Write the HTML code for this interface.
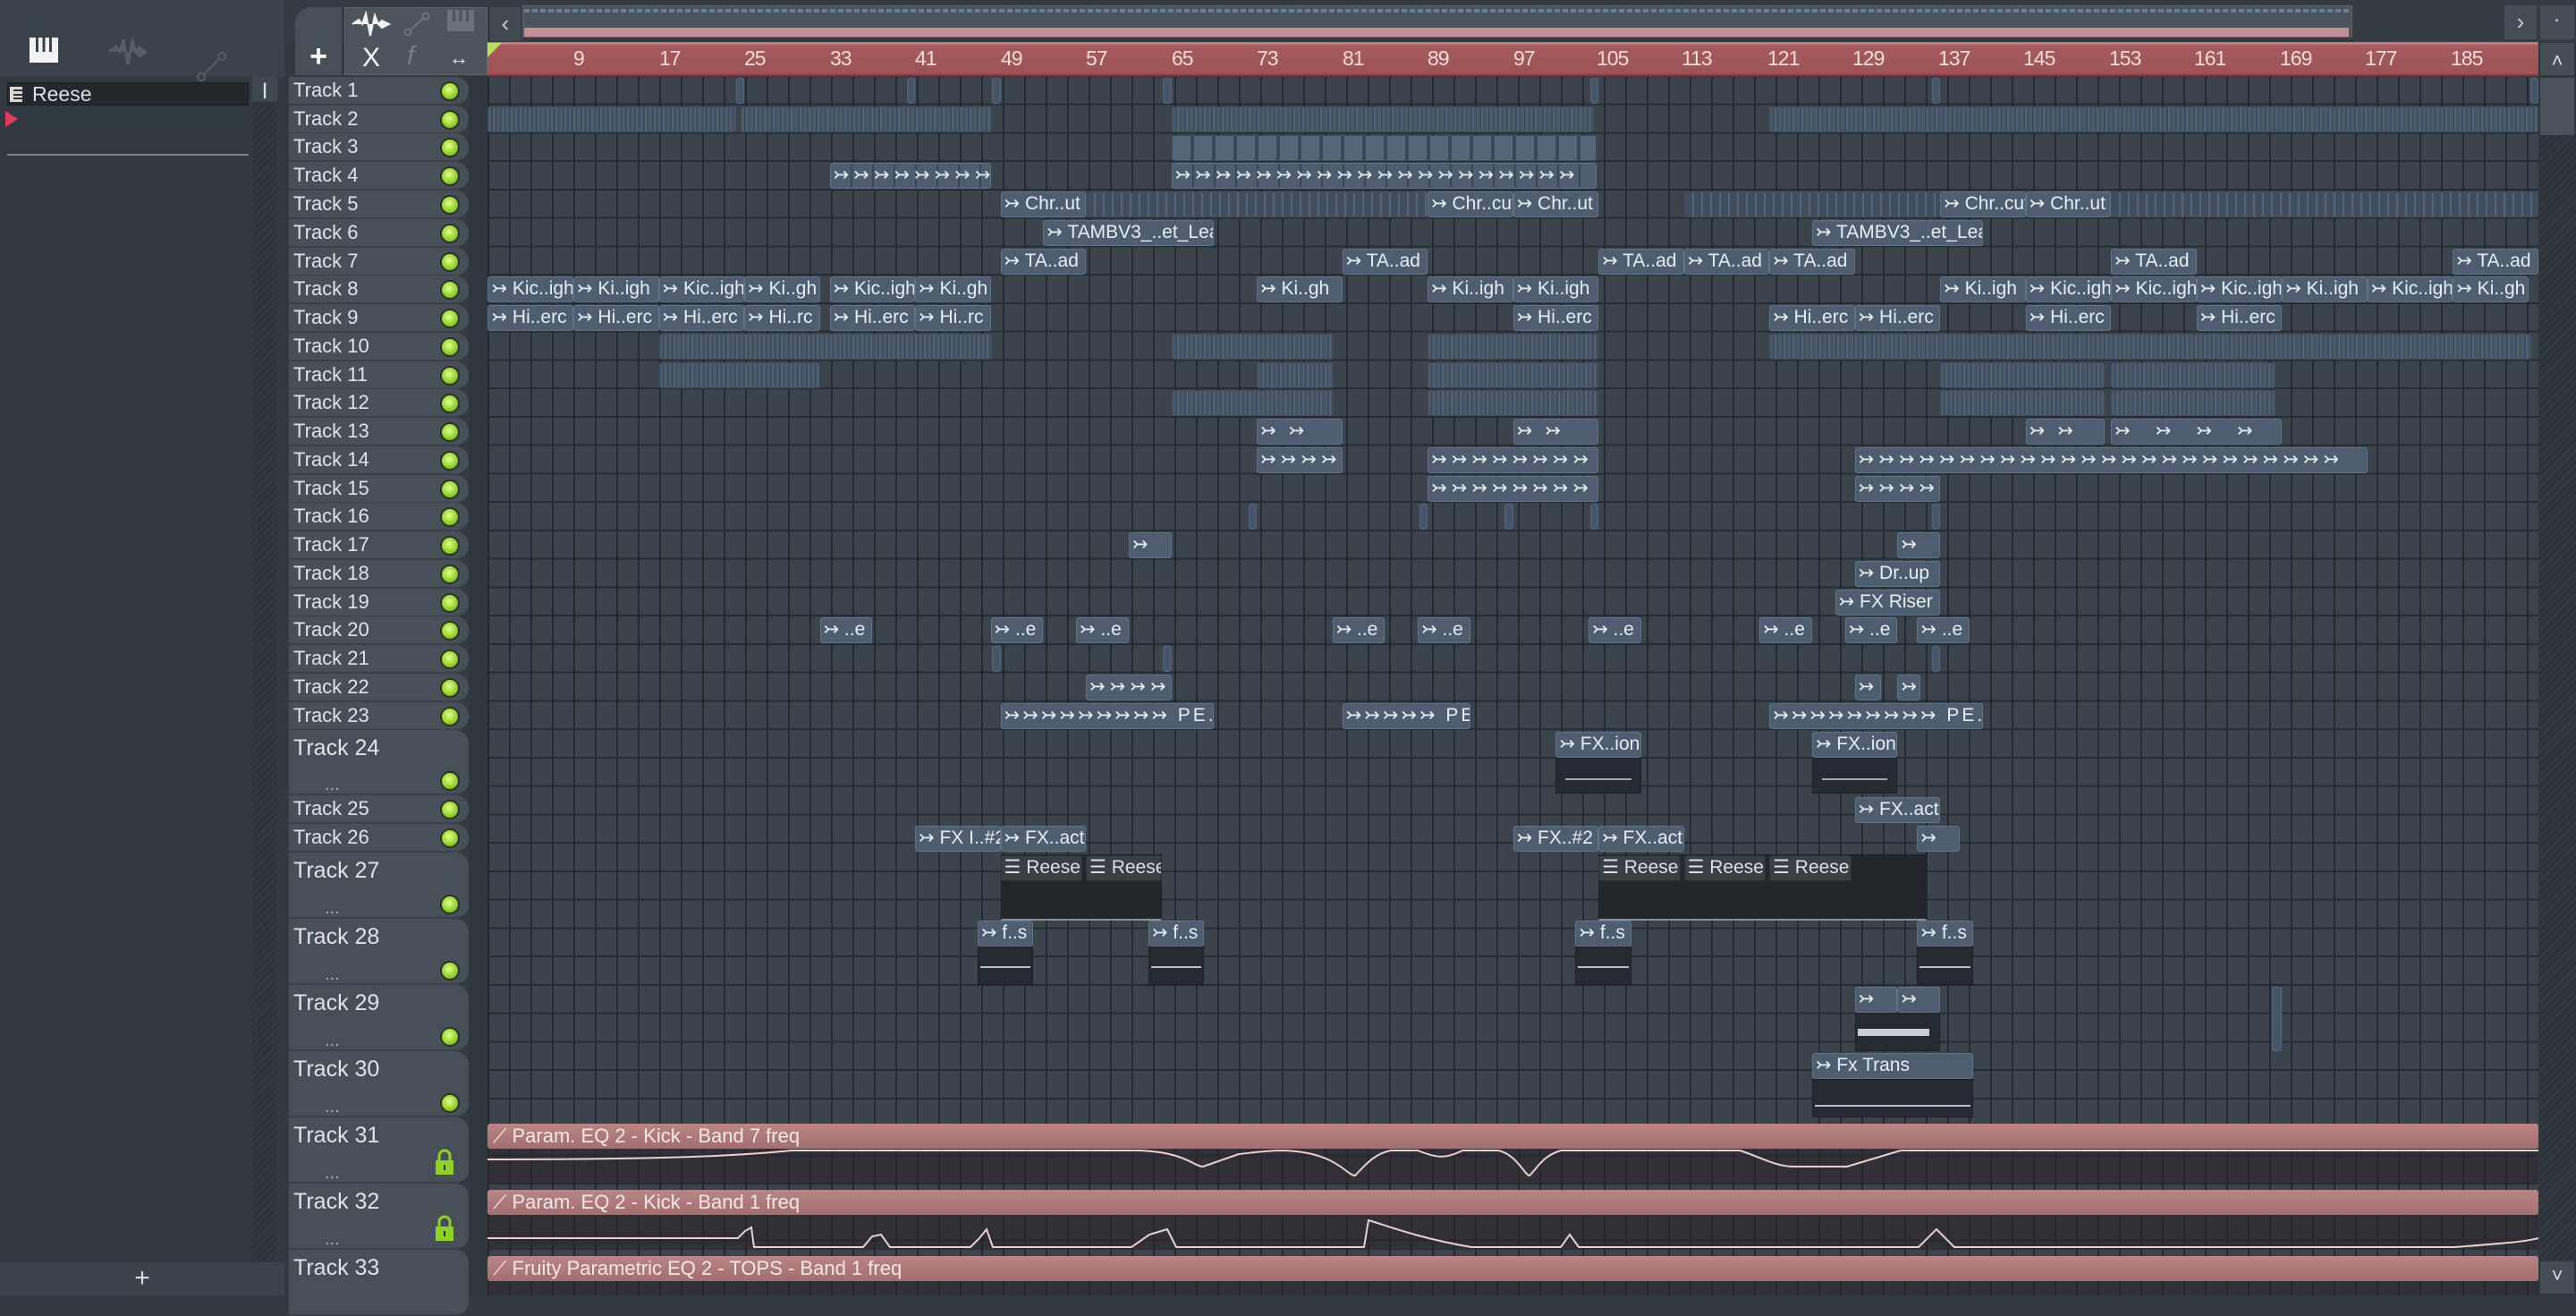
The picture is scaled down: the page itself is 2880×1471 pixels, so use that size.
<!DOCTYPE html>
<html><head><meta charset="utf-8"><style>
*{margin:0;padding:0;box-sizing:border-box}
body{width:2880px;height:1448px;overflow:hidden;background:#333a42;font-family:"Liberation Sans Narrow","Liberation Sans",sans-serif;position:relative}
.ab{position:absolute}
#grid{position:absolute;left:545px;top:86px;width:2293px;height:1362px;background-color:#3b434d;
background-image:repeating-linear-gradient(90deg,#232930 0 2px,transparent 2px 24px),repeating-linear-gradient(180deg,transparent 0 29.75px,#262c33 29.75px 31.75px);}
.ruler{position:absolute;left:545px;top:47px;width:2293px;height:38px;background:linear-gradient(#c47a7a 0 3px,#a65c5e 3px,#9b5355);border-bottom:2px solid #7a3f42}
.ruler span{position:absolute;top:5px;color:#f3dcdc;font-size:23px;letter-spacing:-1px}
.h{position:absolute;left:323px;width:201px;background:#474f58;border-radius:0 15px 15px 0;border-bottom:2px solid #3a4149;color:#e0e4e8;font-size:22px;padding-left:5px;line-height:30px}
.h.t{font-size:25px;line-height:40px}
.l{position:absolute;right:12px;width:18px;height:18px;border-radius:50%;background:radial-gradient(circle at 45% 40%,#e0ff90,#95d42a 55%,#5f9a12);box-shadow:0 0 0 2px #2b3127}
.h .d{position:absolute;left:40px;bottom:0;font-size:20px;color:#aab;line-height:20px}
.c{position:absolute;left:calc(var(--s)*1.8367px);width:calc((var(--e) - var(--s))*1.8367px);top:calc(87px + (var(--r) - 1)*31.75px);height:29px;background:#4e5e70;border:1px solid #617386;border-radius:3px;color:#e6edf3;font-size:21px;line-height:26px;white-space:nowrap;overflow:hidden;padding-left:3px}
.a{background:repeating-linear-gradient(90deg,#4b5b6c 0 3px,#3e4b5a 3px 5px,#52647a 5px 7px,#44525f 7px 10px);border-color:#3f4d5b}
.m{background:#46566a;border-color:#55667a}
.k{background:#3a3f45;border-color:#2d3136}
.bd{position:absolute;left:calc(var(--s)*1.8367px);width:calc((var(--e) - var(--s))*1.8367px);background:#262b31;border:1px solid #1d2126}
.au{position:absolute;left:545px;width:2293px;height:28px;background:linear-gradient(#b98585,#a26e6f);border-radius:3px;color:#f7e8e8;font-size:22px;line-height:28px;padding-left:6px}
.ab2{position:absolute;left:545px;width:2293px;background:rgba(45,36,42,.6)}
</style></head><body>

<!-- left panel -->
<div class="ab" style="left:0;top:0;width:318px;height:86px;background:#3a424b"></div>
<div class="ab" style="left:0;top:86px;width:318px;height:1325px;background:#313941"></div>
<svg class="ab" style="left:33px;top:42px" width="32" height="28"><rect x="0" y="0" width="32" height="28" fill="#f2f2f2"/><rect x="7" y="0" width="3" height="16" fill="#3a424b"/><rect x="14.5" y="0" width="3" height="16" fill="#3a424b"/><rect x="22" y="0" width="3" height="16" fill="#3a424b"/></svg>
<svg class="ab" style="left:120px;top:38px" width="45" height="40"><path d="M2 20 L10 14 L14 20 L18 6 L23 34 L28 8 L32 20 L36 15 L43 20 L36 25 L32 20" fill="#555d66" stroke="#555d66" stroke-width="3"/></svg>
<svg class="ab" style="left:218px;top:55px" width="40" height="40"><circle cx="7" cy="31" r="4" fill="none" stroke="#555d66" stroke-width="2"/><circle cx="30" cy="8" r="4" fill="none" stroke="#555d66" stroke-width="2"/><line x1="10" y1="28" x2="27" y2="11" stroke="#555d66" stroke-width="2"/></svg>
<div class="ab" style="left:8px;top:92px;width:270px;height:26px;background:#24282c;border:1px solid #1b1e21;color:#dde;font-size:23px;line-height:24px;padding-left:27px">Reese</div>
<svg class="ab" style="left:11px;top:97px" width="14" height="17"><rect width="14" height="17" fill="#d8d8d8"/><rect x="4" y="3" width="10" height="2" fill="#333"/><rect x="4" y="8" width="10" height="2" fill="#333"/><rect x="4" y="12" width="10" height="2" fill="#333"/></svg>
<div class="ab" style="left:6px;top:124px;width:0;height:0;border-left:14px solid #e43a5c;border-top:9px solid transparent;border-bottom:9px solid transparent"></div>
<div class="ab" style="left:8px;top:172px;width:270px;height:2px;background:#7b838b"></div>
<div class="ab" style="left:282px;top:86px;width:28px;height:1325px;background:repeating-linear-gradient(135deg,#2c333a 0 3px,#323940 3px 6px)"></div>
<div class="ab" style="left:282px;top:86px;width:28px;height:28px;background:#3f474f;color:#ddd;text-align:center;font-size:18px;line-height:28px;font-weight:bold">|</div>
<div class="ab" style="left:0;top:1411px;width:318px;height:37px;background:#3a424b;color:#ddd;font-size:30px;text-align:center;line-height:36px">+</div>

<!-- header toolbar -->
<div class="ab" style="left:318px;top:0;width:2562px;height:47px;background:#343b43"></div>
<div class="ab" style="left:330px;top:8px;width:52px;height:76px;background:#474f58;border-radius:18px 0 0 0;color:#fff;font-size:34px;text-align:center;line-height:110px;font-weight:bold">+</div>
<div class="ab" style="left:385px;top:8px;width:160px;height:76px;background:#4c545d;border:1px solid #5a626b"></div>
<svg class="ab" style="left:392px;top:12px" width="45" height="30"><path d="M2 15 L9 10 L13 15 L17 3 L22 28 L27 5 L31 15 L35 11 L43 15 L35 19 L31 15" fill="#f0f0f0" stroke="#f0f0f0" stroke-width="2"/></svg>
<svg class="ab" style="left:450px;top:12px" width="32" height="30"><circle cx="6" cy="24" r="3.5" fill="none" stroke="#6d757e" stroke-width="2"/><circle cx="26" cy="6" r="3.5" fill="none" stroke="#6d757e" stroke-width="2"/><line x1="9" y1="21" x2="23" y2="9" stroke="#6d757e" stroke-width="2"/></svg>
<svg class="ab" style="left:500px;top:11px" width="30" height="24"><rect width="30" height="24" fill="#6a727b"/><rect x="6" y="0" width="3" height="13" fill="#4c545d"/><rect x="13.5" y="0" width="3" height="13" fill="#4c545d"/><rect x="21" y="0" width="3" height="13" fill="#4c545d"/></svg>
<div class="ab" style="left:405px;top:48px;color:#fff;font-size:30px">X</div>
<div class="ab" style="left:455px;top:46px;color:#747c85;font-size:30px;font-style:italic">f</div>
<div class="ab" style="left:502px;top:52px;color:#e8e8e8;font-size:22px">&#x2194;</div>
<div class="ab" style="left:548px;top:8px;width:34px;height:38px;background:#414951;color:#ccc;font-size:26px;text-align:center;line-height:36px">&lsaquo;</div>
<div class="ab" style="left:584px;top:6px;width:2046px;height:36px;background:#4b5560;border:1px solid #5b646d"></div>
<div class="ab" style="left:586px;top:10px;width:2040px;height:4px;background:repeating-linear-gradient(90deg,#6c7c90 0 6px,#4b5560 6px 9px)"></div>
<div class="ab" style="left:586px;top:31px;width:2040px;height:10px;background:#c48f90"></div>
<div class="ab" style="left:2800px;top:6px;width:36px;height:38px;background:#454d56;color:#ccc;font-size:26px;text-align:center;line-height:36px">&rsaquo;</div>
<div class="ab" style="left:2840px;top:6px;width:38px;height:38px;background:#454d56;color:#ddd;text-align:center;line-height:36px;font-weight:bold">&middot;</div>

<!-- ruler -->
<div class="ruler">
<div class="ab" style="left:0;top:1px;width:0;height:0;border-left:16px solid #b8e060;border-bottom:16px solid transparent"></div>
<span style="left:96px">9</span><span style="left:192px">17</span><span style="left:287px">25</span><span style="left:383px">33</span><span style="left:478px">41</span><span style="left:574px">49</span><span style="left:669px">57</span><span style="left:765px">65</span><span style="left:860px">73</span><span style="left:956px">81</span><span style="left:1051px">89</span><span style="left:1147px">97</span><span style="left:1240px">105</span><span style="left:1335px">113</span><span style="left:1431px">121</span><span style="left:1526px">129</span><span style="left:1622px">137</span><span style="left:1717px">145</span><span style="left:1813px">153</span><span style="left:1908px">161</span><span style="left:2004px">169</span><span style="left:2099px">177</span><span style="left:2195px">185</span>
</div>

<!-- right scrollbar -->
<div class="ab" style="left:2838px;top:47px;width:42px;height:1401px;background:repeating-linear-gradient(135deg,#2c333a 0 3px,#323940 3px 6px)"></div>
<div class="ab" style="left:2840px;top:48px;width:38px;height:36px;background:#454d56;color:#ddd;text-align:center;font-size:22px;line-height:40px">&#x2C4;</div>
<div class="ab" style="left:2840px;top:87px;width:38px;height:64px;background:#4a525b"></div>
<div class="ab" style="left:2840px;top:1410px;width:38px;height:36px;background:#454d56;color:#ddd;text-align:center;font-size:22px;line-height:32px">&#x2C5;</div>

<div class="ab" style="left:524px;top:86px;width:21px;height:1362px;background:#2f363e"></div>
<div id="grid"></div>

<!-- track headers -->
<div class="h" style="top:86px;height:32px">Track 1<i class="l" style="top:7px"></i></div>
<div class="h" style="top:118px;height:32px">Track 2<i class="l" style="top:7px"></i></div>
<div class="h" style="top:149px;height:32px">Track 3<i class="l" style="top:7px"></i></div>
<div class="h" style="top:181px;height:32px">Track 4<i class="l" style="top:7px"></i></div>
<div class="h" style="top:213px;height:32px">Track 5<i class="l" style="top:7px"></i></div>
<div class="h" style="top:245px;height:32px">Track 6<i class="l" style="top:7px"></i></div>
<div class="h" style="top:277px;height:32px">Track 7<i class="l" style="top:7px"></i></div>
<div class="h" style="top:308px;height:32px">Track 8<i class="l" style="top:7px"></i></div>
<div class="h" style="top:340px;height:32px">Track 9<i class="l" style="top:7px"></i></div>
<div class="h" style="top:372px;height:32px">Track 10<i class="l" style="top:7px"></i></div>
<div class="h" style="top:404px;height:32px">Track 11<i class="l" style="top:7px"></i></div>
<div class="h" style="top:435px;height:32px">Track 12<i class="l" style="top:7px"></i></div>
<div class="h" style="top:467px;height:32px">Track 13<i class="l" style="top:7px"></i></div>
<div class="h" style="top:499px;height:32px">Track 14<i class="l" style="top:7px"></i></div>
<div class="h" style="top:531px;height:32px">Track 15<i class="l" style="top:7px"></i></div>
<div class="h" style="top:562px;height:32px">Track 16<i class="l" style="top:7px"></i></div>
<div class="h" style="top:594px;height:32px">Track 17<i class="l" style="top:7px"></i></div>
<div class="h" style="top:626px;height:32px">Track 18<i class="l" style="top:7px"></i></div>
<div class="h" style="top:658px;height:32px">Track 19<i class="l" style="top:7px"></i></div>
<div class="h" style="top:689px;height:32px">Track 20<i class="l" style="top:7px"></i></div>
<div class="h" style="top:721px;height:32px">Track 21<i class="l" style="top:7px"></i></div>
<div class="h" style="top:753px;height:32px">Track 22<i class="l" style="top:7px"></i></div>
<div class="h" style="top:785px;height:32px">Track 23<i class="l" style="top:7px"></i></div>
<div class="h t" style="top:816px;height:73px">Track 24<span class="d">...</span><i class="l" style="top:48px"></i></div>
<div class="h" style="top:889px;height:32px">Track 25<i class="l" style="top:7px"></i></div>
<div class="h" style="top:921px;height:32px">Track 26<i class="l" style="top:7px"></i></div>
<div class="h t" style="top:953px;height:74px">Track 27<span class="d">...</span><i class="l" style="top:49px"></i></div>
<div class="h t" style="top:1027px;height:74px">Track 28<span class="d">...</span><i class="l" style="top:49px"></i></div>
<div class="h t" style="top:1101px;height:74px">Track 29<span class="d">...</span><i class="l" style="top:49px"></i></div>
<div class="h t" style="top:1175px;height:74px">Track 30<span class="d">...</span><i class="l" style="top:49px"></i></div>
<div class="h t" style="top:1249px;height:74px">Track 31<span class="d">...</span><svg class="ab" style="left:163px;top:34px" width="22" height="32"><path d="M5 14 V9 a6 6 0 0 1 12 0 V14" fill="none" stroke="#8ed31f" stroke-width="3"/><rect x="1" y="14" width="20" height="16" fill="#8ed31f"/><rect x="10" y="19" width="2" height="6" fill="#2a3020"/></svg></div>
<div class="h t" style="top:1323px;height:74px">Track 32<span class="d">...</span><svg class="ab" style="left:163px;top:34px" width="22" height="32"><path d="M5 14 V9 a6 6 0 0 1 12 0 V14" fill="none" stroke="#8ed31f" stroke-width="3"/><rect x="1" y="14" width="20" height="16" fill="#8ed31f"/><rect x="10" y="19" width="2" height="6" fill="#2a3020"/></svg></div>
<div class="h t" style="top:1397px;height:74px">Track 33</div>

<!-- T1 markers -->
<div class="c m" style="--r:1;--s:448;--e:453"></div><div class="c m" style="--r:1;--s:552;--e:557"></div><div class="c m" style="--r:1;--s:604;--e:609"></div><div class="c m" style="--r:1;--s:708;--e:713"></div><div class="c m" style="--r:1;--s:968;--e:973"></div><div class="c m" style="--r:1;--s:1176;--e:1181"></div><div class="c m" style="--r:1;--s:1540;--e:1545"></div>
<!-- T2 -->
<div class="c a" style="--r:2;--s:297;--e:448"></div><div class="c a" style="--r:2;--s:451;--e:604"></div><div class="c a" style="--r:2;--s:713;--e:970"></div><div class="c a" style="--r:2;--s:1077;--e:1545"></div>
<!-- T3 -->
<div class="c a" style="--r:3;--s:713;--e:972;background:repeating-linear-gradient(90deg,#55667a 0 20px,#3c4958 20px 24px)"></div>
<!-- T4 -->
<div class="c" style="--r:4;--s:505;--e:603;letter-spacing:5px;background:repeating-linear-gradient(90deg,#4e5e70 0 22px,#3a4756 22px 24px)">↣↣↣↣↣↣↣↣</div>
<div class="c" style="--r:4;--s:713;--e:972;letter-spacing:5px;background:repeating-linear-gradient(90deg,#4e5e70 0 22px,#3a4756 22px 24px)">↣↣↣↣↣↣↣↣↣↣↣↣↣↣↣↣↣↣↣↣</div>
<!-- T5 -->
<div class="c" style="--r:5;--s:609;--e:661">↣ Chr..ut</div><div class="c a" style="--r:5;--s:661;--e:869;background:repeating-linear-gradient(90deg,#404d5c 0 8px,#52637a 8px 10px)"></div>
<div class="c" style="--r:5;--s:869;--e:921">↣ Chr..cut</div><div class="c" style="--r:5;--s:921;--e:973">↣ Chr..ut</div>
<div class="c a" style="--r:5;--s:1025;--e:1181;background:repeating-linear-gradient(90deg,#404d5c 0 8px,#52637a 8px 10px)"></div>
<div class="c" style="--r:5;--s:1181;--e:1233">↣ Chr..cut</div><div class="c" style="--r:5;--s:1233;--e:1285">↣ Chr..ut</div>
<div class="c a" style="--r:5;--s:1285;--e:1545;background:repeating-linear-gradient(90deg,#404d5c 0 8px,#52637a 8px 10px)"></div>
<!-- T6 -->
<div class="c" style="--r:6;--s:635;--e:739">↣ TAMBV3_..et_Lead</div><div class="c" style="--r:6;--s:1103;--e:1207">↣ TAMBV3_..et_Lead</div>
<!-- T7 -->
<div class="c" style="--r:7;--s:609;--e:661">↣ TA..ad</div><div class="c" style="--r:7;--s:817;--e:869">↣ TA..ad</div><div class="c" style="--r:7;--s:973;--e:1025">↣ TA..ad</div><div class="c" style="--r:7;--s:1025;--e:1077">↣ TA..ad</div><div class="c" style="--r:7;--s:1077;--e:1129">↣ TA..ad</div><div class="c" style="--r:7;--s:1285;--e:1337">↣ TA..ad</div><div class="c" style="--r:7;--s:1493;--e:1545">↣ TA..ad</div>
<!-- T8 -->
<div class="c" style="--r:8;--s:297;--e:349">↣ Kic..igh</div><div class="c" style="--r:8;--s:349;--e:401">↣ Ki..igh</div><div class="c" style="--r:8;--s:401;--e:453">↣ Kic..igh</div><div class="c" style="--r:8;--s:453;--e:499">↣ Ki..gh</div><div class="c" style="--r:8;--s:505;--e:557">↣ Kic..igh</div><div class="c" style="--r:8;--s:557;--e:603">↣ Ki..gh</div><div class="c" style="--r:8;--s:765;--e:817">↣ Ki..gh</div><div class="c" style="--r:8;--s:869;--e:921">↣ Ki..igh</div><div class="c" style="--r:8;--s:921;--e:973">↣ Ki..igh</div><div class="c" style="--r:8;--s:1181;--e:1233">↣ Ki..igh</div><div class="c" style="--r:8;--s:1233;--e:1285">↣ Kic..igh</div><div class="c" style="--r:8;--s:1285;--e:1337">↣ Kic..igh</div><div class="c" style="--r:8;--s:1337;--e:1389">↣ Kic..igh</div><div class="c" style="--r:8;--s:1389;--e:1441">↣ Ki..igh</div><div class="c" style="--r:8;--s:1441;--e:1493">↣ Kic..igh</div><div class="c" style="--r:8;--s:1493;--e:1539">↣ Ki..gh</div>
<!-- T9 -->
<div class="c" style="--r:9;--s:297;--e:349">↣ Hi..erc</div><div class="c" style="--r:9;--s:349;--e:401">↣ Hi..erc</div><div class="c" style="--r:9;--s:401;--e:453">↣ Hi..erc</div><div class="c" style="--r:9;--s:453;--e:499">↣ Hi..rc</div><div class="c" style="--r:9;--s:505;--e:557">↣ Hi..erc</div><div class="c" style="--r:9;--s:557;--e:603">↣ Hi..rc</div><div class="c" style="--r:9;--s:921;--e:973">↣ Hi..erc</div><div class="c" style="--r:9;--s:1077;--e:1129">↣ Hi..erc</div><div class="c" style="--r:9;--s:1129;--e:1181">↣ Hi..erc</div><div class="c" style="--r:9;--s:1233;--e:1285">↣ Hi..erc</div><div class="c" style="--r:9;--s:1337;--e:1389">↣ Hi..erc</div>
<!-- T10-12 -->
<div class="c a" style="--r:10;--s:401;--e:604"></div><div class="c a" style="--r:10;--s:713;--e:812"></div><div class="c a" style="--r:10;--s:869;--e:973"></div><div class="c a" style="--r:10;--s:1077;--e:1541"></div>
<div class="c a" style="--r:11;--s:401;--e:499"></div><div class="c a" style="--r:11;--s:765;--e:812"></div><div class="c a" style="--r:11;--s:869;--e:973"></div><div class="c a" style="--r:11;--s:1181;--e:1281"></div><div class="c a" style="--r:11;--s:1285;--e:1385"></div>
<div class="c a" style="--r:12;--s:713;--e:812"></div><div class="c a" style="--r:12;--s:869;--e:973"></div><div class="c a" style="--r:12;--s:1181;--e:1281"></div><div class="c a" style="--r:12;--s:1285;--e:1385"></div>
<!-- T13-15 -->
<div class="c" style="--r:13;--s:765;--e:817;letter-spacing:14px">↣↣</div><div class="c" style="--r:13;--s:921;--e:973;letter-spacing:14px">↣↣</div><div class="c" style="--r:13;--s:1233;--e:1281;letter-spacing:14px">↣↣</div><div class="c" style="--r:13;--s:1285;--e:1389;letter-spacing:28px">↣↣↣↣</div>
<div class="c" style="--r:14;--s:765;--e:817;letter-spacing:5px">↣↣↣↣</div><div class="c" style="--r:14;--s:869;--e:973;letter-spacing:5px">↣↣↣↣↣↣↣↣</div><div class="c" style="--r:14;--s:1129;--e:1441;letter-spacing:5px">↣↣↣↣↣↣↣↣↣↣↣↣↣↣↣↣↣↣↣↣↣↣↣↣</div>
<div class="c" style="--r:15;--s:869;--e:973;letter-spacing:5px">↣↣↣↣↣↣↣↣</div><div class="c" style="--r:15;--s:1129;--e:1181;letter-spacing:5px">↣↣↣↣</div>
<!-- T16-19 -->
<div class="c m" style="--r:16;--s:760;--e:765"></div><div class="c m" style="--r:16;--s:864;--e:869"></div><div class="c m" style="--r:16;--s:916;--e:921"></div><div class="c m" style="--r:16;--s:968;--e:973"></div><div class="c m" style="--r:16;--s:1176;--e:1181"></div>
<div class="c" style="--r:17;--s:687;--e:713">↣</div><div class="c" style="--r:17;--s:1155;--e:1181">↣</div>
<div class="c" style="--r:18;--s:1129;--e:1181">↣ Dr..up</div>
<div class="c" style="--r:19;--s:1117;--e:1181">↣ FX Riser</div>
<!-- T20 -->
<div class="c" style="--r:20;--s:499;--e:531">↣ ..e</div><div class="c" style="--r:20;--s:603;--e:635">↣ ..e</div><div class="c" style="--r:20;--s:655;--e:687">↣ ..e</div><div class="c" style="--r:20;--s:811;--e:843">↣ ..e</div><div class="c" style="--r:20;--s:863;--e:895">↣ ..e</div><div class="c" style="--r:20;--s:967;--e:999">↣ ..e</div><div class="c" style="--r:20;--s:1071;--e:1103">↣ ..e</div><div class="c" style="--r:20;--s:1123;--e:1155">↣ ..e</div><div class="c" style="--r:20;--s:1167;--e:1199">↣ ..e</div>
<!-- T21-23 -->
<div class="c m" style="--r:21;--s:604;--e:609"></div><div class="c m" style="--r:21;--s:708;--e:713"></div><div class="c m" style="--r:21;--s:1176;--e:1181"></div>
<div class="c" style="--r:22;--s:661;--e:713;letter-spacing:5px">↣↣↣↣</div><div class="c" style="--r:22;--s:1129;--e:1145">↣</div><div class="c" style="--r:22;--s:1155;--e:1169">↣</div>
<div class="c" style="--r:23;--s:609;--e:739;letter-spacing:3px">↣↣↣↣↣↣↣↣↣ PE..</div><div class="c" style="--r:23;--s:817;--e:895;letter-spacing:3px">↣↣↣↣↣ PE..</div><div class="c" style="--r:23;--s:1077;--e:1207;letter-spacing:3px">↣↣↣↣↣↣↣↣↣ PE..</div>
<!-- T24 -->
<div class="c" style="--s:947;--e:999;top:818px">↣ FX..ion</div><div class="bd" style="--s:947;--e:999;top:847px;height:40px"><i class="ab" style="left:10px;right:10px;top:22px;height:2px;background:#9aa"></i></div>
<div class="c" style="--s:1103;--e:1155;top:818px">↣ FX..ion</div><div class="bd" style="--s:1103;--e:1155;top:847px;height:40px"><i class="ab" style="left:10px;right:10px;top:22px;height:2px;background:#9aa"></i></div>
<!-- T25-26 -->
<div class="c" style="--s:1129;--e:1181;top:891px">↣ FX..act</div>
<div class="c" style="--s:557;--e:609;top:923px">↣ FX I..#2</div><div class="c" style="--s:609;--e:661;top:923px">↣ FX..act</div><div class="c" style="--s:921;--e:973;top:923px">↣ FX..#2</div><div class="c" style="--s:973;--e:1025;top:923px">↣ FX..act</div><div class="c" style="--s:1167;--e:1193;top:923px">↣</div>
<!-- T27 -->
<div class="bd" style="--s:609;--e:707;top:955px;height:74px;background:#23272c;border-bottom:2px solid #8a9098"></div>
<div class="c k" style="--s:609;--e:659;top:956px;color:#dde">☰ Reese</div><div class="c k" style="--s:661;--e:707;top:956px;color:#dde">☰ Reese</div>
<div class="bd" style="--s:973;--e:1173;top:955px;height:74px;background:#23272c;border-bottom:2px solid #8a9098"></div>
<div class="c k" style="--s:973;--e:1023;top:956px;color:#dde">☰ Reese</div><div class="c k" style="--s:1025;--e:1075;top:956px;color:#dde">☰ Reese</div><div class="c k" style="--s:1077;--e:1127;top:956px;color:#dde">☰ Reese</div>
<!-- T28 -->
<div class="c" style="--s:595;--e:629;top:1029px">↣ f..s</div><div class="bd" style="--s:595;--e:629;top:1058px;height:43px"><i class="ab" style="left:2px;right:2px;top:21px;height:2px;background:#bbc"></i></div>
<div class="c" style="--s:699;--e:733;top:1029px">↣ f..s</div><div class="bd" style="--s:699;--e:733;top:1058px;height:43px"><i class="ab" style="left:2px;right:2px;top:21px;height:2px;background:#bbc"></i></div>
<div class="c" style="--s:959;--e:993;top:1029px">↣ f..s</div><div class="bd" style="--s:959;--e:993;top:1058px;height:43px"><i class="ab" style="left:2px;right:2px;top:21px;height:2px;background:#bbc"></i></div>
<div class="c" style="--s:1167;--e:1201;top:1029px">↣ f..s</div><div class="bd" style="--s:1167;--e:1201;top:1058px;height:43px"><i class="ab" style="left:2px;right:2px;top:21px;height:2px;background:#bbc"></i></div>
<!-- T29 -->
<div class="c" style="--s:1129;--e:1155;top:1103px">↣</div><div class="c" style="--s:1155;--e:1181;top:1103px">↣</div><div class="bd" style="--s:1129;--e:1181;top:1132px;height:43px"><i class="ab" style="left:2px;width:80px;top:17px;height:8px;background:#c4ccd4"></i></div>
<div class="c m" style="--s:1383;--e:1389;top:1103px;height:72px"></div>
<!-- T30 -->
<div class="c" style="--s:1103;--e:1201;top:1177px">↣ Fx Trans</div><div class="bd" style="--s:1103;--e:1201;top:1206px;height:43px"><i class="ab" style="left:2px;right:2px;top:28px;height:2px;background:#bbc"></i></div>

<!-- automation -->
<div class="ab2" style="top:1284px;height:39px"></div>
<div class="ab2" style="top:1358px;height:39px"></div>
<div class="ab2" style="top:1432px;height:16px"></div>
<div class="au" style="top:1256px">⟋ Param. EQ 2 - Kick - Band 7 freq</div>
<div class="au" style="top:1330px">⟋ Param. EQ 2 - Kick - Band 1 freq</div>
<div class="au" style="top:1404px">⟋ Fruity Parametric EQ 2 - TOPS - Band 1 freq</div>
<svg class="ab" style="left:545px;top:1284px" width="2293" height="164"><g fill="none" stroke="#e8d0d0" stroke-width="2">
<path d="M0 12 C200 12 280 8 340 2 L730 2 C780 4 790 20 800 20 L840 6 C860 4 870 2 890 2 C950 4 960 30 970 30 C980 20 990 6 1010 2 L1040 2 C1060 10 1070 12 1090 2 L1130 2 C1150 6 1160 30 1165 30 C1175 20 1180 8 1200 2 L1400 2 C1420 8 1440 20 1460 20 L1520 20 L1560 8 L1580 2 L2293 2"/>
<path d="M0 100 L280 100 L288 92 L295 88 L298 110 L420 110 L430 98 L440 96 L450 110 L540 110 L550 100 L558 90 L565 110 L720 110 L740 96 L760 90 L770 110 L980 110 L985 80 C1000 84 1040 100 1100 110 L1200 110 L1210 96 L1220 110 L1600 110 L1620 90 L1640 110 L2200 110 C2250 106 2280 104 2293 100"/>
</g></svg>

</body></html>
